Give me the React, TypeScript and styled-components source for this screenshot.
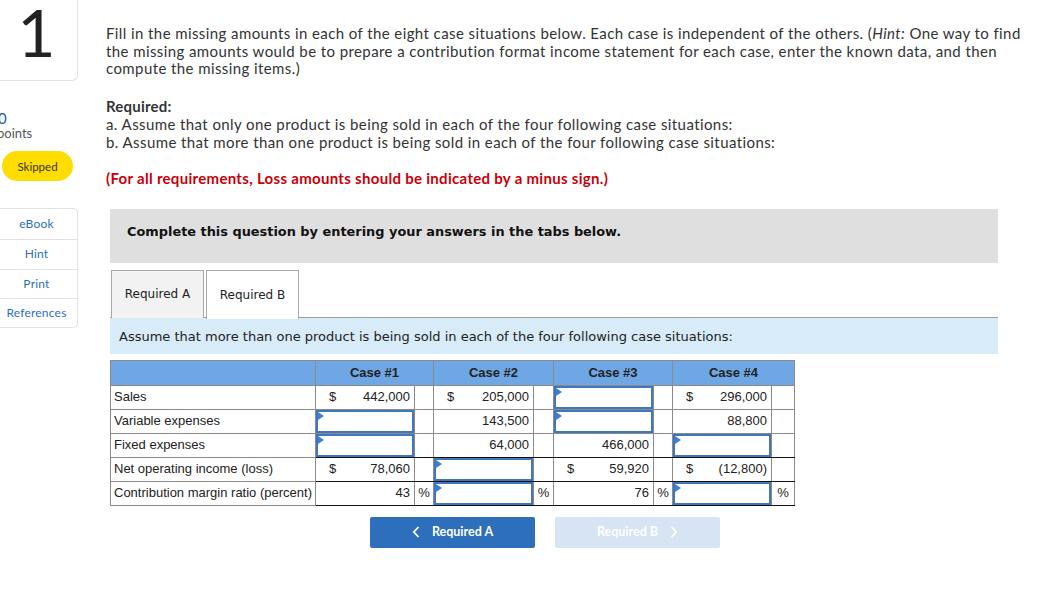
import React from "react";
import styled, { createGlobalStyle, css } from "styled-components";

const GlobalStyle = createGlobalStyle`
  html, body { margin: 0; padding: 0; background: #fff; }
  body { font-family: Lato, "Open Sans", Arial, sans-serif; color: #333; }
  * { box-sizing: border-box; }
`;

const Page = styled.div`
  display: flex;
  align-items: flex-start;
  width: 1038px;
  height: 589px;
  overflow: hidden;
`;

const Sidebar = styled.aside`
  width: 82px;
  margin-left: -4px;
  display: flex;
  flex-direction: column;
  flex-shrink: 0;
`;

const NumberBox = styled.div`
  height: 81px;
  border: 1px solid #e2e2e2;
  border-top: none;
  border-left: none;
  border-radius: 0 0 6px 0;
  display: flex;
  justify-content: center;
  font-family: Lato, sans-serif;
  font-size: 66px;
  line-height: 64px;
  color: #222;
`;

const Score = styled.div`
  margin-top: 30px;
  padding-left: 2px;
  font-size: 15px;
  line-height: 15px;
  color: #1d5b9f;
`;

const ScoreLabel = styled.div`
  padding-left: 1px;
  font-size: 13px;
  line-height: 15px;
  color: #555;
`;

const Pill = styled.div`
  margin: 10px 0 0 6px;
  width: 71px;
  height: 30px;
  border-radius: 15px;
  background: #ffdd00;
  color: #333;
  font-size: 11.5px;
  display: flex;
  align-items: center;
  justify-content: center;
`;

const LinksBox = styled.div`
  margin-top: 27px;
  border: 1px solid #e2e2e2;
  border-left: none;
  border-radius: 0 5px 5px 0;
  display: flex;
  flex-direction: column;
`;

const LinkItem = styled.div<{ $h: number }>`
  height: ${(p) => p.$h}px;
  display: flex;
  align-items: center;
  justify-content: center;
  padding-bottom: 2px;
  font-size: 12px;
  letter-spacing: 0.2px;
  color: #2c6fbb;
  & + & { border-top: 1px solid #e2e2e2; }
`;

const Main = styled.main`
  margin-left: 28px;
  width: 922px;
  padding-top: 25px;
  font-size: 15px;
  letter-spacing: 0.41px;
  line-height: 17.6px;
  color: #333;
`;

const Para = styled.p`
  margin: 0;
`;

const RequiredBlock = styled.div`
  margin-top: 19px;
  line-height: 18px;
`;

const Bold = styled.div`
  font-weight: 700;
  letter-spacing: 0.2px;
`;

const Warning = styled.div`
  margin-top: 18px;
  line-height: 18px;
  font-weight: 700;
  letter-spacing: 0.3px;
  color: #c8000a;
`;

const Panel = styled.section`
  margin: 22px 0 0 4px;
  width: 888px;
  letter-spacing: 0;
  font-family: "DejaVu Sans", Verdana, sans-serif;
`;

const Banner = styled.div`
  height: 54px;
  background: #dfdfdf;
  display: flex;
  align-items: center;
  padding: 0 0 8px 17px;
  font-weight: 700;
  font-size: 12.9px;
  color: #111;
`;

const Tabs = styled.div`
  display: flex;
  gap: 2px;
  margin-top: 7px;
  padding-left: 1px;
  height: 48px;
  border-bottom: 1px solid #9c9c9c;
`;

const Tab = styled.div<{ $active?: boolean }>`
  width: 93px;
  border: 1px solid #a8a8a8;
  border-bottom: none;
  ${(p) =>
    p.$active
      ? css`
          background: #fff;
          margin-bottom: -1px;
          height: 49px;
        `
      : css`
          background: #f2f2f2;
          height: 48px;
        `}
  display: flex;
  align-items: center;
  justify-content: center;
  padding-top: 2px;
  font-size: 12px;
  color: #222;
`;

const InfoBar = styled.div`
  height: 36px;
  background: #d8ebf8;
  display: flex;
  align-items: center;
  padding: 2px 0 0 9px;
  font-size: 13px;
  color: #222;
`;

const Table = styled.table`
  margin-top: 6px;
  border-collapse: collapse;
  table-layout: fixed;
  width: 684px;
  font-family: "Liberation Sans", Arial, sans-serif;
  font-size: 13px;
  color: #222;
`;

const HeadCell = styled.th`
  height: 25px;
  background: #6ea7e4;
  border: 1px solid #8a8a8a;
  font-weight: 700;
  font-size: 13px;
  text-align: center;
  padding: 0;
  color: #222;
`;

const LabelCell = styled.td`
  height: 24px;
  border: 1px solid #8a8a8a;
  padding: 0 0 0 3px;
  white-space: nowrap;
`;

const ValueCell = styled.td<{ $heavy?: boolean }>`
  height: 24px;
  border: 1px solid #8a8a8a;
  ${(p) => p.$heavy && css`border-bottom: 1px solid #111;`}
  padding: 0;
`;

const ValueInner = styled.div`
  display: flex;
  justify-content: space-between;
  align-items: center;
  padding: 0 4px 0 13px;
  height: 23px;
`;

const Unit = styled.div`
  text-align: center;
`;

const InputBox = styled.div`
  position: relative;
  height: 23px;
  border: 2px solid #3f76bd;
  background: #fff;
  &::before {
    content: "";
    position: absolute;
    top: 0;
    left: 0;
    border-top: 4px solid transparent;
    border-bottom: 4px solid transparent;
    border-left: 6px solid #3a80d6;
  }
`;

const ButtonRow = styled.div`
  display: flex;
  gap: 20px;
  margin: 11px 0 0 260px;
`;

const NavButton = styled.div<{ $disabled?: boolean }>`
  width: 165px;
  height: 31px;
  border-radius: 2px;
  background: ${(p) => (p.$disabled ? "#d6e4f3" : "#2d6fba")};
  color: #fff;
  display: flex;
  align-items: center;
  justify-content: center;
  gap: 12px;
  font-family: Lato, sans-serif;
  font-weight: 700;
  font-size: 12.5px;
`;

type Cell = { kind: "val"; cur?: boolean; v: string } | { kind: "input" };

type Row = { label: string; cells: [Cell, string][]; heavy?: boolean };

const rows: Row[] = [
  {
    label: "Sales",
    cells: [
      [{ kind: "val", cur: true, v: "442,000" }, ""],
      [{ kind: "val", cur: true, v: "205,000" }, ""],
      [{ kind: "input" }, ""],
      [{ kind: "val", cur: true, v: "296,000" }, ""],
    ],
  },
  {
    label: "Variable expenses",
    cells: [
      [{ kind: "input" }, ""],
      [{ kind: "val", v: "143,500" }, ""],
      [{ kind: "input" }, ""],
      [{ kind: "val", v: "88,800" }, ""],
    ],
  },
  {
    label: "Fixed expenses",
    heavy: true,
    cells: [
      [{ kind: "input" }, ""],
      [{ kind: "val", v: "64,000" }, ""],
      [{ kind: "val", v: "466,000" }, ""],
      [{ kind: "input" }, ""],
    ],
  },
  {
    label: "Net operating income (loss)",
    heavy: true,
    cells: [
      [{ kind: "val", cur: true, v: "78,060" }, ""],
      [{ kind: "input" }, ""],
      [{ kind: "val", cur: true, v: "59,920" }, ""],
      [{ kind: "val", cur: true, v: "(12,800)" }, ""],
    ],
  },
  {
    label: "Contribution margin ratio (percent)",
    heavy: true,
    cells: [
      [{ kind: "val", v: "43" }, "%"],
      [{ kind: "input" }, "%"],
      [{ kind: "val", v: "76" }, "%"],
      [{ kind: "input" }, "%"],
    ],
  },
];

const colWidths = [205, 99, 19, 100, 20, 100, 19, 99, 23];

function renderCell(c: Cell) {
  if (c.kind === "input") return <InputBox />;
  return (
    <ValueInner>
      <span>{c.cur ? "$" : ""}</span>
      <span>{c.v}</span>
    </ValueInner>
  );
}

const ChevronLeft = () => (
  <svg width="8" height="12" viewBox="0 0 8 12" fill="none">
    <path d="M6.5 1 L1.8 6 L6.5 11" stroke="#fff" strokeWidth="1.8" />
  </svg>
);

const ChevronRight = () => (
  <svg width="8" height="12" viewBox="0 0 8 12" fill="none">
    <path d="M1.5 1 L6.2 6 L1.5 11" stroke="#fff" strokeWidth="1.8" />
  </svg>
);

export default function App() {
  return (
    <>
      <GlobalStyle />
      <Page>
        <Sidebar>
          <NumberBox>1</NumberBox>
          <Score>0</Score>
          <ScoreLabel>points</ScoreLabel>
          <Pill>Skipped</Pill>
          <LinksBox>
            <LinkItem $h={30}>eBook</LinkItem>
            <LinkItem $h={30}>Hint</LinkItem>
            <LinkItem $h={29}>Print</LinkItem>
            <LinkItem $h={29}>References</LinkItem>
          </LinksBox>
        </Sidebar>
        <Main>
          <Para>
            Fill in the missing amounts in each of the eight case situations below. Each case is
            independent of the others. (<i>Hint:</i> One way to find the missing amounts would be
            to prepare a contribution format income statement for each case, enter the known data,
            and then compute the missing items.)
          </Para>
          <RequiredBlock>
            <Bold>Required:</Bold>
            <div>a. Assume that only one product is being sold in each of the four following case situations:</div>
            <div>b. Assume that more than one product is being sold in each of the four following case situations:</div>
          </RequiredBlock>
          <Warning>(For all requirements, Loss amounts should be indicated by a minus sign.)</Warning>
          <Panel>
            <Banner>Complete this question by entering your answers in the tabs below.</Banner>
            <Tabs>
              <Tab>Required A</Tab>
              <Tab $active>Required B</Tab>
            </Tabs>
            <InfoBar>
              Assume that more than one product is being sold in each of the four following case situations:
            </InfoBar>
            <Table>
              <colgroup>
                {colWidths.map((w, i) => (
                  <col key={i} style={{ width: w }} />
                ))}
              </colgroup>
              <thead>
                <tr>
                  <HeadCell />
                  <HeadCell colSpan={2}>Case #1</HeadCell>
                  <HeadCell colSpan={2}>Case #2</HeadCell>
                  <HeadCell colSpan={2}>Case #3</HeadCell>
                  <HeadCell colSpan={2}>Case #4</HeadCell>
                </tr>
              </thead>
              <tbody>
                {rows.map((r) => (
                  <tr key={r.label}>
                    <LabelCell>{r.label}</LabelCell>
                    {r.cells.map(([c, unit], i) => (
                      <React.Fragment key={i}>
                        <ValueCell $heavy={r.heavy}>{renderCell(c)}</ValueCell>
                        <ValueCell $heavy={r.heavy}>
                          <Unit>{unit}</Unit>
                        </ValueCell>
                      </React.Fragment>
                    ))}
                  </tr>
                ))}
              </tbody>
            </Table>
            <ButtonRow>
              <NavButton>
                <ChevronLeft />
                <span>Required A</span>
              </NavButton>
              <NavButton $disabled>
                <span>Required B</span>
                <ChevronRight />
              </NavButton>
            </ButtonRow>
          </Panel>
        </Main>
      </Page>
    </>
  );
}
